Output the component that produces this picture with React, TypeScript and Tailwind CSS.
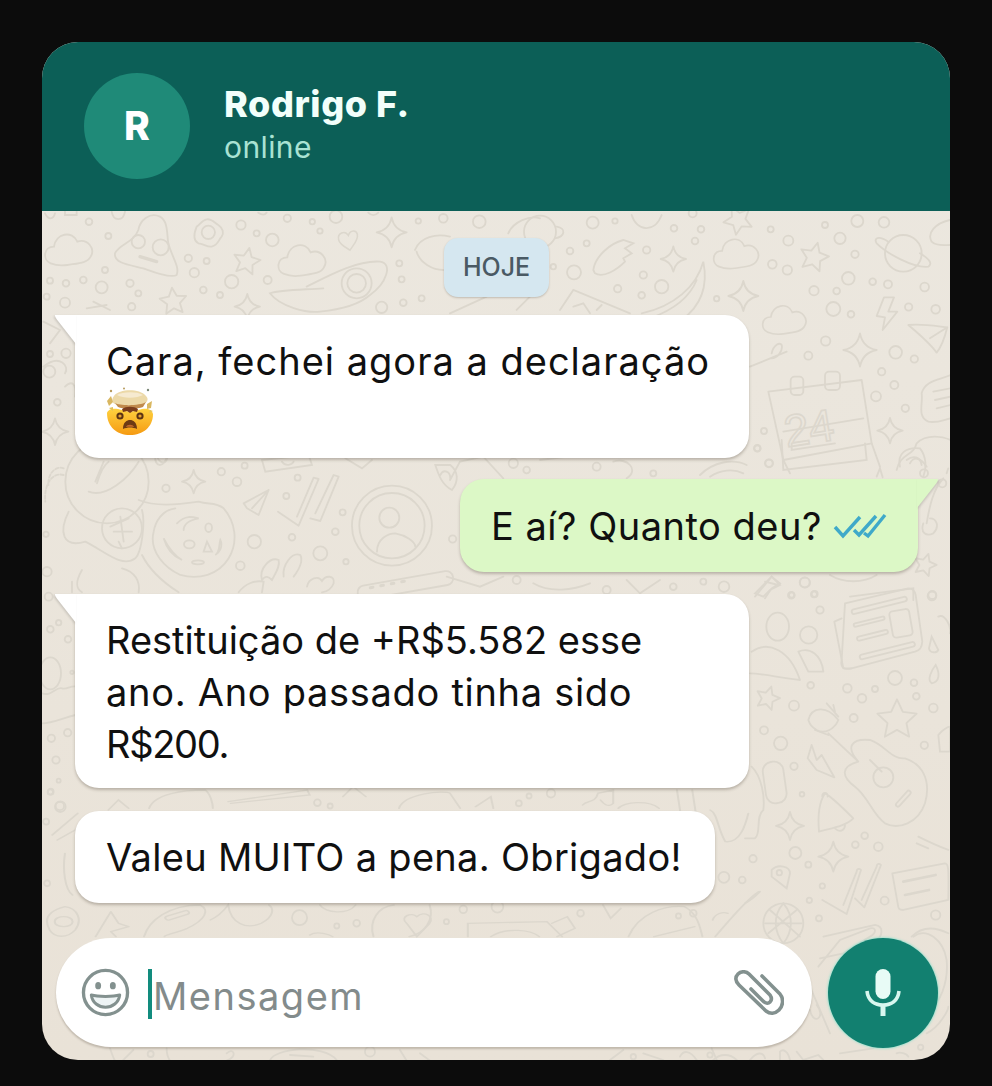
import React from "react";

type C = [number, number, number];
const Dots = ({ list }: { list: C[] }) => (
  <>
    {list.map(([x, y, r], i) => (
      <circle key={i} cx={x} cy={y} r={r} />
    ))}
  </>
);

const star5 = (cx: number, cy: number, R: number, rot = 0) => {
  const pts: string[] = [];
  for (let i = 0; i < 10; i++) {
    const a = (Math.PI / 5) * i - Math.PI / 2 + rot;
    const r = i % 2 ? R * 0.48 : R;
    pts.push(`${(cx + r * Math.cos(a)).toFixed(1)},${(cy + r * Math.sin(a)).toFixed(1)}`);
  }
  return pts.join(" ");
};
const Star = ({ x, y, r, rot = 0 }: { x: number; y: number; r: number; rot?: number }) => (
  <polygon points={star5(x, y, r, rot)} strokeLinejoin="round" />
);
const Spark = ({ x, y, r }: { x: number; y: number; r: number }) => {
  const s = r * 0.16;
  return (
    <path
      d={`M${x} ${y - r}Q${x + s} ${y - s} ${x + r} ${y}Q${x + s} ${y + s} ${x} ${y + r}Q${x - s} ${y + s} ${x - r} ${y}Q${x - s} ${y - s} ${x} ${y - r}Z`}
      strokeLinejoin="round"
    />
  );
};
const Cloud = ({ x, y, s = 1 }: { x: number; y: number; s?: number }) => (
  <path
    transform={`translate(${x} ${y}) scale(${s})`}
    d="M20 100C-5 90 -2 50 30 50C35 10 85 0 100 35C130 25 155 55 140 80C130 100 100 100 70 105C50 108 35 106 20 100Z"
  />
);
const Heart = ({ x, y, s = 1 }: { x: number; y: number; s?: number }) => (
  <path
    transform={`translate(${x} ${y}) scale(${s})`}
    d="M0 -22C-12 -42 -40 -30 -34 -6C-30 10 -10 20 6 30C16 14 36 -6 32 -26C28 -42 8 -42 0 -22Z"
  />
);

const lowerDots: C[] = [
  [17, 35, 7], [35, 78, 10], [8, 125, 7], [10, 310, 7], [540, 68, 8], [565, 78, 6], [955, 48, 6], [935, 70, 7], [998, 40, 10],
  [1337, 292, 13], [1373, 300, 8], [505, 413, 18], [578, 438, 6],
  [617, 430, 8], [793, 425, 6], [826, 388, 9], [893, 380, 14], [1056, 400, 8], [1248, 408, 6], [1277, 400, 8],
];

const Wallpaper = () => (
  <svg
    className="absolute inset-0 w-full h-full"
    viewBox="42 211 908 849"
    fill="none"
    stroke="#dcd7cd"
    strokeWidth="2"
    strokeLinecap="round"
  >
    {/* region top-left */}
    <g transform="translate(40 30) scale(.3333)" strokeWidth="5.5">
      <Cloud x={12} y={600} />
      <path d="M225 670C240 640 280 640 295 600C300 570 330 545 360 560C385 575 380 610 385 640C395 680 420 710 410 735C395 745 350 730 310 715C270 705 220 700 225 670Z" />
      <circle cx="295" cy="635" r="20" />
      <circle cx="362" cy="652" r="24" />
      <path d="M300 680L350 695" strokeWidth="10" />
      <circle cx="505" cy="607" r="20" />
      <path d="M470 590C480 585 485 570 500 568C515 565 525 580 535 585C550 595 552 610 545 620C535 630 535 645 515 650C500 652 490 640 475 640C460 632 462 610 470 590Z" />
      <Star x={620} y={695} r={42} rot={0.2} />
      <Cloud x={712} y={632} />
      <Heart x={925} y={635} s={0.85} />
      <Spark x={1055} y={607} r={45} />
      <path d="M800 770C860 740 950 690 1020 695C1060 700 1040 760 990 795C950 830 890 840 840 845C800 850 720 830 690 790C720 780 770 780 850 775" />
      <circle cx="950" cy="760" r="45" />
      <circle cx="950" cy="760" r="28" />
      <path d="M1125 660C1140 620 1190 610 1230 620M1130 665C1140 700 1180 720 1210 720" />
      <path d="M140 835L200 825M160 815L210 840" />
      <Star x={400} y={815} r={42} rot={-0.1} />
      <Spark x={622} y={830} r={38} />
      <path d="M1230 850L1340 800M1430 840L1470 800" />
      <path d="M1405 610C1420 575 1470 555 1500 565" />
      <path d="M15 550C25 570 40 570 45 550M75 545V555H110V545M215 545C220 575 250 575 255 545M655 548C665 555 675 555 680 548M985 548C995 558 1005 558 1015 548" />
      <Dots
        list={[
          [147, 575, 10], [205, 618, 9], [195, 720, 9], [30, 752, 9], [78, 760, 10], [130, 750, 10], [185, 772, 18],
          [75, 818, 15], [20, 800, 9], [270, 760, 11], [295, 790, 9], [275, 830, 11], [445, 685, 11], [500, 693, 9],
          [463, 728, 14], [490, 780, 10], [540, 795, 9], [575, 755, 20], [683, 750, 12], [603, 585, 14], [650, 610, 9],
          [697, 630, 19], [742, 565, 11], [817, 575, 8], [840, 603, 8], [888, 560, 19], [1078, 700, 9], [1085, 748, 9],
          [1145, 805, 9], [1090, 818, 10], [1025, 832, 17], [1135, 573, 8], [1210, 565, 13], [1318, 575, 19],
        ]}
      />
    </g>

    {/* region top-middle */}
    <g transform="translate(540 210) scale(.3333)" strokeWidth="5.5">
      <circle cx="0" cy="65" r="48" />
      <path d="M50 50C80 55 75 80 45 85" />
      <path d="M275 15C290 65 345 70 365 15" />
      <path d="M160 180C165 140 210 100 250 90L280 100L255 115L275 130L250 145L255 155C230 180 190 205 165 190Z" />
      <Spark x={400} y={147} r={38} />
      <Star x={595} y={30} r={45} rot={3.3} />
      <Cloud x={518} y={75} s={0.95} />
      <path d="M305 310C400 290 470 230 490 155C505 230 480 290 425 330M330 325C400 300 450 260 470 210" />
      <path d="M60 300L100 240L270 310M100 290L130 280L150 310M170 300L185 285" />
      <Dots
        list={[
          [158, 38, 18], [225, 33, 8], [140, 100, 9], [90, 123, 10], [320, 120, 11], [40, 170, 8], [102, 187, 21],
          [402, 55, 10], [483, 58, 10], [465, 93, 10], [310, 195, 11], [365, 230, 20], [233, 236, 11], [305, 256, 10],
          [530, 266, 8], [458, 10, 12],
        ]}
      />
    </g>

    {/* region right-top */}
    <g transform="translate(740 210) scale(.3333)" strokeWidth="5.5">
      <Star x={222} y={142} r={45} rot={0.25} />
      <Spark x={10} y={258} r={45} />
      <Cloud x={65} y={275} s={0.92} />
      <circle cx="490" cy="130" r="55" />
      <path d="M445 95C415 75 400 85 410 100C440 130 520 175 565 170C580 160 565 145 540 130" />
      <path d="M630 30C585 40 560 70 575 95C590 110 615 105 630 105" />
      <path d="M432 262L462 262L445 305L472 305L428 360L435 322L410 318Z" strokeLinejoin="round" />
      <path d="M505 345C545 340 600 350 622 352C615 380 605 410 590 428C570 400 535 370 505 345ZM570 385L622 352" strokeLinejoin="round" />
      <Spark x={360} y={420} r={50} />
      <path d="M30 470L140 425M95 430C100 405 120 395 125 405C130 425 110 445 95 445" />
      <path d="M85 545L365 510L395 700L130 750Z" strokeLinejoin="round" />
      <path d="M130 665L370 625" />
      <rect x="152" y="500" width="38" height="55" rx="12" />
      <rect x="255" y="485" width="45" height="55" rx="12" />
      <text x="140" y="712" fontFamily="'Liberation Sans', sans-serif" fontSize="135" fill="none" strokeWidth="5" transform="rotate(-9 140 712)">24</text>
      <path d="M130 750L150 790M395 700L420 770" />
      <Spark x={450} y={662} r={38} />
      <path d="M545 550C555 510 600 510 632 495M545 550C550 580 530 620 565 635C590 640 610 630 632 625M580 545L632 535M585 570L632 560M590 595L632 585" />
      <path d="M470 780C480 730 520 740 530 700C560 670 610 680 632 690M510 760C520 740 540 740 560 770" />
      <Dots
        list={[
          [352, 33, 18], [432, 37, 16], [255, 45, 9], [92, 58, 9], [145, 92, 15], [300, 85, 17], [345, 133, 11], [97, 163, 13],
          [142, 180, 14], [325, 205, 19], [398, 215, 10], [444, 223, 12], [554, 231, 13], [222, 242, 14], [290, 243, 10],
          [280, 297, 21], [333, 313, 10], [506, 291, 11], [587, 298, 13], [257, 393, 14], [205, 437, 12], [467, 427, 19],
          [523, 447, 11], [425, 485, 11], [463, 525, 12], [408, 559, 15], [496, 595, 11], [72, 663, 9], [52, 715, 9], [87, 760, 12],
        ]}
      />
    </g>

    {/* region left of bubble one */}
    <g transform="translate(40 310) scale(.3333)" strokeWidth="5.5">
      <path d="M10 35L60 60L30 100" />
      <path d="M10 170C60 130 90 170 75 190M75 230C95 210 110 220 105 260" />
      <Spark x={45} y={365} r={40} />
      <Dots list={[[30, 132, 9], [78, 130, 14], [28, 185, 18], [52, 277, 10]]} />
    </g>

    {/* region below bubble one */}
    <g transform="translate(42 455) scale(.3333)" strokeWidth="5.5">
      <circle cx="195" cy="80" r="125" />
      <path d="M165 85C175 50 185 30 200 20M140 110C190 130 260 70 290 20M185 20L160 80M340 0C335 40 370 40 375 0" />
      <path d="M65 60C30 50 5 90 10 140M65 40C40 30 15 60 20 90" strokeDasharray="10 6" />
      <path d="M80 170C50 230 60 280 130 260C190 290 240 340 280 310C300 290 310 200 300 165" />
      <circle cx="240" cy="220" r="60" />
      <path d="M205 215L260 190M215 230H270M235 185L245 260M230 260L240 280" />
      <path d="M290 135C340 155 400 150 470 140C500 150 520 140 545 160C580 200 590 260 560 310C530 360 470 375 415 360C370 340 320 290 335 230C340 200 360 165 400 160" />
      <path d="M405 205C430 180 450 185 470 190C445 195 425 205 425 225" />
      <ellipse cx="442" cy="268" rx="16" ry="12" />
      <path d="M365 250C375 285 395 305 420 315C395 300 378 275 365 250Z" />
      <ellipse cx="500" cy="218" rx="10" ry="13" />
      <path d="M485 290L495 260L510 290Z" />
      <path d="M535 255C545 275 530 295 520 300C535 290 530 270 535 255Z" />
      <ellipse cx="468" cy="322" rx="18" ry="6" />
      <path d="M120 345C100 380 100 400 120 412M240 340C280 350 295 380 290 412M300 300C320 340 360 380 410 412" />
      <path d="M90 380V412M345 0C350 30 380 30 375 0" />
      <Spark x={455} y={80} r={35} />
      <path d="M605 145L680 105L650 180L615 160ZM630 160L680 105" strokeLinejoin="round" />
      <path d="M708 170L770 212L830 72L815 68L765 185M805 190L835 198L890 65L875 60L820 175" strokeLinejoin="round" />
      <path d="M660 15L800 0L810 30L670 50ZM720 20C730 35 750 30 755 20" />
      <path d="M910 10L960 40L990 15" />
      <circle cx="1050" cy="212" r="120" />
      <circle cx="1050" cy="212" r="98" />
      <circle cx="1042" cy="188" r="30" />
      <path d="M1005 290C1005 250 1040 235 1060 235C1090 240 1120 260 1120 275" />
      <path d="M1180 30C1190 60 1200 90 1230 105C1250 80 1250 50 1225 30ZM1195 60C1205 40 1225 50 1225 70" />
      <path d="M660 375C650 340 685 305 710 315C715 335 700 355 690 375C680 365 670 360 660 375ZM725 365C720 330 750 290 775 300C785 320 770 345 755 365" />
      <path d="M795 395C800 370 830 360 840 378C850 360 880 360 875 385C870 400 855 410 840 412" />
      <rect x="945" y="370" width="290" height="42" rx="20" transform="rotate(-10 1090 390)" />
      <path d="M985 398L1090 378" strokeDasharray="8 24" strokeWidth="9" />
      <path d="M590 412C610 385 640 375 665 380L660 412" />
      <Dots
        list={[
          [372, 100, 11], [538, 50, 11], [608, 32, 9], [585, 80, 13], [767, 68, 9], [733, 123, 9], [902, 172, 9], [880, 230, 10],
          [750, 247, 10], [637, 260, 20], [835, 295, 21], [595, 332, 13], [912, 320, 8], [12, 238, 8], [15, 350, 14], [1232, 252, 11],
        ]}
      />
    </g>

    {/* gaps around outgoing bubble */}
    <g transform="translate(700 440) scale(.3333)" strokeWidth="5.5">
      <path d="M245 0L250 90L500 60L495 10M275 10V30L405 10" />
      <path d="M0 105C40 65 100 55 140 75M30 110C60 90 100 85 130 100" />
      <path d="M600 80C590 40 620 20 660 25C680 50 680 85 670 110M620 60C640 45 660 50 665 75" />
      <path d="M530 110L540 85L548 112M740 100L745 85" />
      <path d="M730 115C700 150 690 190 680 250M670 250C660 280 680 290 700 280C720 260 710 235 690 235" />
      <Star x={675} y={375} r={35} rot={0.3} />
      <Dots list={[[172, 25, 10], [207, 70, 11], [727, 130, 12], [672, 100, 12], [10, 425, 9], [72, 440, 16], [314, 427, 15], [275, 465, 8], [344, 462, 9], [697, 465, 12]]} />
      <path d="M165 470L215 410L240 430L215 445L195 475M390 405C430 430 490 430 530 405M450 470L640 445V480" />
    </g>

    <g transform="translate(440 440) scale(.3333)" strokeWidth="5.5">
      <path d="M30 120L60 65L130 50L190 115M300 60L420 45M520 65C560 50 600 90 560 115" />
      <Dots list={[[260, 90, 10], [220, 70, 14], [470, 80, 12], [640, 100, 9]]} />
      <path d="M20 410L120 440L190 410M280 430C330 460 400 450 450 430M560 420L600 460L660 420" />
      <Dots list={[[230, 420, 12], [500, 450, 12], [700, 440, 10]]} />
    </g>

    {/* right region */}
    <g transform="translate(745 570) scale(.3333)" strokeWidth="5.5">
      <path d="M30 70L80 20L105 45L75 60L55 80ZM60 35L100 45" />
      <path d="M300 100L490 55C505 55 510 65 512 75L532 215C530 235 525 240 510 245L320 295C300 300 285 295 290 270Z" strokeLinejoin="round" />
      <path d="M290 145L268 155L295 295L320 295" strokeLinejoin="round" />
      <rect x="318" y="100" width="170" height="14" rx="7" transform="rotate(-14 400 107)" />
      <rect x="325" y="150" width="95" height="10" rx="5" transform="rotate(-14 372 155)" />
      <rect x="335" y="190" width="95" height="12" rx="6" transform="rotate(-14 382 196)" />
      <rect x="342" y="235" width="170" height="14" rx="7" transform="rotate(-14 427 242)" />
      <rect x="438" y="120" width="60" height="80" rx="10" transform="rotate(-10 468 160)" />
      <ellipse cx="98" cy="170" rx="34" ry="42" />
      <circle cx="191" cy="195" r="26" />
      <path d="M20 245C70 210 135 240 165 330C110 325 50 310 15 310" strokeLinejoin="round" />
      <path d="M160 245C195 230 230 255 235 305L190 305Z" strokeLinejoin="round" />
      <Star x={68} y={385} r={37} rot={0.3} />
      <Star x={456} y={450} r={62} rot={0} />
      <path d="M190 450C200 410 245 405 280 450C270 475 240 495 215 480C200 470 195 465 190 450Z" />
      <path d="M245 400L280 440M265 405L270 425M210 480L250 495" />
      <path d="M250 490L340 575C300 530 320 505 375 510C420 525 440 570 480 565C530 580 560 630 540 700C520 760 460 780 420 760C380 730 370 680 330 650C290 620 285 590 340 575M375 570L410 605" />
      <circle cx="415" cy="622" r="30" />
      <rect x="445" y="680" width="60" height="12" rx="6" transform="rotate(-48 475 686)" />
      <path d="M200 525L215 570L230 555L268 622L215 600L188 565Z" strokeLinejoin="round" />
      <rect x="58" y="575" width="62" height="125" rx="28" transform="rotate(-8 89 637)" />
      <path d="M20 590C50 620 60 680 55 720C30 740 50 790 30 805H0" />
      <Spark x={135} y={768} r={42} />
      <path d="M240 670C260 680 300 720 325 745C300 770 255 775 222 785C218 740 220 700 240 670ZM232 680C230 665 250 665 248 680M270 775C285 790 300 780 300 765" strokeLinejoin="round" />
      <Spark x={265} y={860} r={45} />
      <path d="M80 900C100 880 135 890 135 910L125 955L80 920Z" />
      <circle cx="103" cy="908" r="8" />
      <path d="M232 990L305 1032L348 900C345 895 335 895 335 905L295 1005M330 985L358 1012L408 885C405 880 395 880 395 890L350 990" strokeLinejoin="round" />
      <path d="M442 910L600 880C610 880 612 890 610 990L475 1020C460 1020 460 1015 458 1000Z" strokeLinejoin="round" />
      <path d="M475 935L572 915M480 975L552 960" strokeWidth="8" />
      <circle cx="115" cy="1060" r="60" />
      <path d="M60 1060L170 1060M115 1000C80 1040 90 1090 115 1120M115 1000C150 1040 140 1090 115 1120M75 1020L165 1100M70 1090L155 1020" />
      <path d="M235 1100L390 1065C420 1070 410 1100 395 1110" />
      <path d="M0 1000C20 990 40 970 45 965M500 1100C530 1070 570 1070 610 1090" />
      <path d="M560 200L580 240C575 250 555 250 552 235ZM572 285C585 310 585 335 560 340C545 330 560 300 572 285Z" />
      <path d="M580 140C600 130 620 170 615 190M580 495C590 480 610 470 615 470V545H585Z" />
      <path d="M520 800C540 810 570 825 610 840M515 820L550 835" />
      <Dots
        list={[
          [180, 38, 15], [139, 76, 10], [207, 73, 9], [225, 120, 11], [561, 78, 13], [197, 346, 10], [307, 355, 13], [351, 385, 13],
          [390, 357, 9], [450, 324, 21], [507, 338, 10], [514, 379, 10], [565, 414, 13], [147, 407, 15], [326, 444, 12], [57, 481, 12],
          [107, 520, 20], [538, 526, 11], [147, 589, 11], [171, 673, 7], [359, 797, 10], [331, 824, 10], [400, 830, 13], [151, 849, 18],
          [24, 866, 11], [190, 884, 9], [232, 948, 8], [193, 991, 8], [222, 1045, 9], [419, 992, 12], [572, 1035, 14],
        ]}
      />
    </g>

    {/* lower strip: its zoom was 1.96x wide and 3x high */}
    <g transform="translate(42 780) scale(.51 .3333)" strokeWidth="4">
      <path d="M20 165L70 100M30 180L100 120" />
      <path d="M45 220C40 270 45 330 60 345" />
      <path d="M130 90L150 60L170 85M210 85C220 40 280 30 320 30C330 40 335 70 335 85M365 65L520 30L525 45L370 70" />
      <path d="M590 50L610 20L635 50" />
      <path d="M700 85C710 40 790 30 800 40L820 85M850 80L880 50L885 85" />
      <path d="M1060 75C1070 60 1085 70 1090 40L1120 30V70C1110 85 1100 70 1095 60" />
      <path d="M1130 85C1140 65 1190 60 1210 85M1245 30L1260 180M1275 30L1290 180" />
      <path d="M1310 90C1325 100 1325 150 1340 185C1370 190 1380 130 1385 100" />
      <path d="M15 450C0 410 20 390 45 380C70 385 80 420 65 450C50 475 25 475 15 450Z" />
      <path d="M25 425C25 405 60 405 60 425C60 445 25 445 25 425Z" />
      <path d="M105 470L125 420L135 395L150 430L170 440L135 455L145 470" strokeLinejoin="round" />
      <path d="M200 470C210 420 250 375 310 375C330 390 320 420 285 445C260 460 240 465 240 470" />
      <rect x="240" y="400" width="50" height="12" rx="6" transform="rotate(-25 265 406)" />
      <path d="M330 420C345 410 355 395 365 375C370 430 400 450 430 430C455 410 455 385 445 375" />
      <path d="M545 375C555 400 600 405 615 375M650 470C640 420 660 380 690 375M760 375C770 420 750 460 720 470" />
      <path d="M715 430C700 410 725 395 735 410C750 390 770 410 760 430L735 470Z" />
      <path d="M835 470V430L990 425L1020 470M1000 430L1030 410L1045 445L1010 470" />
      <path d="M880 470C910 440 960 450 975 470" />
      <path d="M1100 375L1115 415L1135 385M1150 470C1170 400 1220 375 1260 380C1285 400 1290 440 1295 470" />
      <path d="M1200 470L1280 440M1315 420C1320 400 1335 395 1345 400" />
      <path d="M1320 470C1345 425 1380 360 1405 335" />
      <path d="M525 465C540 450 565 465 570 470" />
    </g>
    <g transform="translate(42 780)" strokeWidth="1.8">
      <Dots list={lowerDots.map(([x, y, r]) => [x * 0.51, y * 0.3333, r * 0.42] as C)} />
    </g>

    {/* left strip */}
    <g transform="translate(42 590) scale(.3333)" strokeWidth="5.5">
      <ellipse cx="25" cy="250" rx="32" ry="48" />
      <path d="M0 310C30 320 40 290 60 295C75 300 85 285 105 290M0 400C30 400 60 385 100 375" />
      <Dots list={[[25, 118, 10], [50, 98, 8], [78, 148, 10], [90, 247, 5], [28, 445, 11], [77, 428, 11], [42, 510, 11], [50, 572, 6], [25, 606, 8], [55, 650, 16], [20, 20, 12]]} />
    </g>

    {/* bottom strip */}
    <g transform="translate(30 920) scale(.3333)" strokeWidth="5.5">
      <path d="M240 385C245 400 250 415 255 422M280 420L310 390M410 385C410 400 415 415 420 422M590 400C610 380 625 410 590 422M720 422C730 385 880 370 920 420M780 405L850 410" />
      <circle cx="362" cy="402" r="9" />
      <circle cx="1020" cy="395" r="15" />
      <path d="M1110 390L1130 422M1170 400L1200 422" />
    </g>
    <g transform="translate(600 1040) scale(.3333)" strokeWidth="5.5">
      <path d="M30 60L70 30M130 40L190 60M240 50C250 30 270 30 290 60M340 60C360 40 390 40 410 60" />
      <Dots list={[[100, 50, 8], [330, 45, 8]]} />
    </g>
    <g transform="translate(700 920) scale(.3333)" strokeWidth="5.5">
      <path d="M35 385L50 420M150 420C170 395 190 395 195 415M240 420V395C250 385 265 395 270 420M290 395L310 420L355 405L370 420M420 400L520 385M590 400C600 395 620 400 625 410M680 340C720 320 745 270 745 260" />
      <circle cx="662" cy="382" r="8" />
      <path d="M355 140L420 60L510 25C530 20 530 40 510 50L430 100L360 115M640 50C680 20 730 60 740 120C745 170 730 230 700 260" />
      <path d="M350 255C380 290 340 320 330 270M330 200L390 340" />
    </g>
  </svg>
);

const Tail = ({ side, color }: { side: "l" | "r"; color: string }) =>
  side === "l" ? (
    <svg className="absolute top-0 left-[-20px] w-[21px] h-[29px] drop-shadow-[-1px_1px_1px_rgba(0,0,0,0.15)]" viewBox="0 0 21 29">
      <path d="M0 0H21V29L1.5 4Q-.5 1 0 0Z" fill={color} />
    </svg>
  ) : (
    <svg className="absolute top-0 right-[-20px] w-[21px] h-[29px] drop-shadow-[1px_1px_1px_rgba(0,0,0,0.15)]" viewBox="0 0 21 29">
      <path d="M21 0H0V29L19.5 4Q21.5 1 21 0Z" fill={color} />
    </svg>
  );

const Emoji = () => (
  <svg className="w-12 h-12 block" viewBox="0 0 48 48">
    <defs>
      <linearGradient id="face" x1="0" y1="0" x2="0" y2="1">
        <stop offset="0" stopColor="#ffd23f" />
        <stop offset="1" stopColor="#f59a12" />
      </linearGradient>
    </defs>
    <path d="M1 26C2 22 7 21 12 22L24 25L36 22C41 21 46 22 47 27C47 40 37 48 24 48C11 48 1 40 1 26Z" fill="url(#face)" />
    <path d="M8 9C13 2 33 1 40 9C44 13 40 17 34 18L14 18C7 18 4 14 8 9Z" fill="#ecd9a8" />
    <path d="M11 8C16 5 30 4 37 8C32 11 18 12 11 8Z" fill="#f6ead0" />
    <path d="M9 16C14 19 34 19 40 15L37 20C32 22 16 22 12 20Z" fill="#c08a4c" />
    <path d="M16 22C20 19 28 19 32 22L31 25L27 24L24 26L21 24L17 25Z" fill="#7a3d1c" />
    <path d="M1 14L5 9L7 15L3 19Z M41 17L46 14L45 21L41 22Z" fill="#d9b761" />
    <path d="M3 21L7 20L7 24Z M44 23L47 24L43 26Z" fill="#e2c15a" />
    <circle cx="5" cy="4" r="1.2" fill="#b79a5c" />
    <circle cx="18" cy="1.5" r="1" fill="#b79a5c" />
    <circle cx="42" cy="3" r="1.2" fill="#7c8a78" />
    <circle cx="14" cy="29" r="3.6" fill="#5c3414" />
    <circle cx="14" cy="29" r="1.6" fill="#e7a22d" />
    <circle cx="34" cy="29" r="3.6" fill="#5c3414" />
    <circle cx="34" cy="29" r="1.6" fill="#e7a22d" />
    <path d="M17 42C17 35 21 33 24 33C27 33 31 35 31 42C27 40 21 40 17 42Z" fill="#6d3a14" />
    <path d="M20 40C21 37 27 37 28 40C26 39.5 22 39.5 20 40Z" fill="#c46a2c" />
  </svg>
);

const bubble = "relative rounded-[24px] shadow-[0_2px_3px_rgba(70,60,45,0.3)] py-[20px] px-[31px] text-[38px] leading-[52px] text-[#101010] whitespace-nowrap";

export default function App() {
  return (
    <div className="min-h-screen bg-[#0c0c0c] pt-[42px] px-[42px] font-['Inter','Liberation_Sans',sans-serif]">
      <div className="w-[908px] h-[1018px] rounded-[36px] overflow-hidden flex flex-col bg-gradient-to-b from-[#ece8e0] to-[#e9e2d7]">
        <header className="h-[169px] shrink-0 bg-[#0c5f57] flex items-center gap-[34px] pl-[42px] pb-[1px]">
          <div className="w-[106px] h-[106px] rounded-full bg-[#1f8a78] flex items-center justify-center text-white font-extrabold text-[39px]">
            R
          </div>
          <div className="flex flex-col gap-[2px] mt-[-4px]">
            <div className="text-[#f2fffb] font-extrabold text-[36px] leading-[44px] tracking-[0.6px]">Rodrigo F.</div>
            <div className="text-[#a9e2d3] text-[30px] leading-[38px] tracking-[0.4px]">online</div>
          </div>
        </header>

        <main className="relative flex-1 flex flex-col">
          <Wallpaper />
          <div className="relative flex-1 flex flex-col pt-[27px] pl-[33px] pr-[32px]">
            <div className="self-center w-[105px] h-[59px] rounded-[14px] bg-[#d5e7f0] shadow-[0_1px_2px_rgba(70,60,45,0.25)] flex items-center justify-center text-[#4a5a64] font-medium text-[25px]">
              HOJE
            </div>

            <div className={`${bubble} bg-white w-[674px] h-[143px] mt-[18px] rounded-tl-none`}>
              <Tail side="l" color="#ffffff" />
              <span className="tracking-[1px]">Cara, fechei agora a declaração</span>
              <Emoji />
            </div>

            <div className={`${bubble} bg-[#dcf8c6] self-end w-[458px] h-[93px] mt-[21px] rounded-tr-none flex items-center`}>
              <Tail side="r" color="#dcf8c6" />
              <span className="tracking-[0.5px]">E aí? Quanto deu?</span>
              <svg className="ml-auto w-[54px] h-[26px] shrink-0" viewBox="0 0 54 26" fill="none" stroke="#3fa9c9" strokeWidth="3.4">
                <path d="M2 14L10 23L27 4" />
                <path d="M21 17L26 22L43 3" />
                <path d="M31 20L35 23L52 2" />
              </svg>
            </div>

            <div className={`${bubble} bg-white w-[674px] h-[194px] mt-[22px] rounded-tl-none`}>
              <Tail side="l" color="#ffffff" />
              Restituição de +R$5.582 esse
              <br />
              <span className="tracking-[0.7px]">ano. Ano passado tinha sido</span>
              <br />
              <span className="tracking-[-1.3px]">R$200.</span>
            </div>

            <div className={`${bubble} bg-white w-[640px] h-[92px] mt-[23px]`}>
              <span className="tracking-[0.3px]">Valeu MUITO a pena. Obrigado!</span>
            </div>

            <div className="mt-auto mb-[12px] ml-[-19px] mr-[-20px] flex items-start gap-[16px]">
              <div className="flex-1 h-[109px] rounded-full bg-white shadow-[0_2px_2px_rgba(70,60,45,0.25)] flex items-center pl-[25px] pr-[28px]">
                <svg className="w-[49px] h-[49px] shrink-0" viewBox="0 0 50 50" fill="none">
                  <circle cx="25" cy="25" r="22.5" stroke="#83918f" strokeWidth="3.4" />
                  <ellipse cx="17.5" cy="18" rx="3" ry="3.8" fill="#83918f" />
                  <ellipse cx="32.5" cy="18" rx="3" ry="3.8" fill="#83918f" />
                  <path d="M10.5 27.5C17 29.5 33 29.5 39.5 27.5C38.5 35.5 32 40 25 40C18 40 11.5 35.5 10.5 27.5Z" fill="#eef4f5" stroke="#83918f" strokeWidth="3" strokeLinejoin="round" />
                </svg>
                <div className="w-[4px] h-[50px] bg-[#128c7e] ml-[18px] mt-[2px] shrink-0" />
                <div className="ml-[1px] mt-[6px] text-[#838b8b] text-[38px] leading-[50px] tracking-[1.5px]">Mensagem</div>
                <svg className="ml-auto w-[50px] h-[46px] shrink-0" viewBox="0 0 50 46" fill="none" stroke="#83918f" strokeWidth="3.6" strokeLinecap="round" strokeLinejoin="round">
                  <path d="M28 6L46 24C50 29 49 36 45 40C41 44 36 44 32 41L5 15C1 11 1 7 4 4C7 1 12 1 15 4L36 25C38 28 38 30 36 32C34 34 31 33 29 31L17 19" />
                </svg>
              </div>
              <div className="w-[110px] h-[110px] rounded-full bg-[#128070] shadow-[0_0_2px_1px_rgba(140,225,205,0.7)] flex items-center justify-center shrink-0">
                <svg className="w-[36px] h-[48px]" viewBox="0 0 36 48">
                  <rect x="10.5" y="0" width="15" height="30" rx="7.5" fill="#e8fbf6" />
                  <path d="M2 22C3 32 10 36 18 36C26 36 33 32 34 22" fill="none" stroke="#d8f7ef" strokeWidth="3.6" />
                  <rect x="15.5" y="36" width="5" height="11" fill="#d8f7ef" />
                </svg>
              </div>
            </div>
          </div>
        </main>
      </div>
    </div>
  );
}
